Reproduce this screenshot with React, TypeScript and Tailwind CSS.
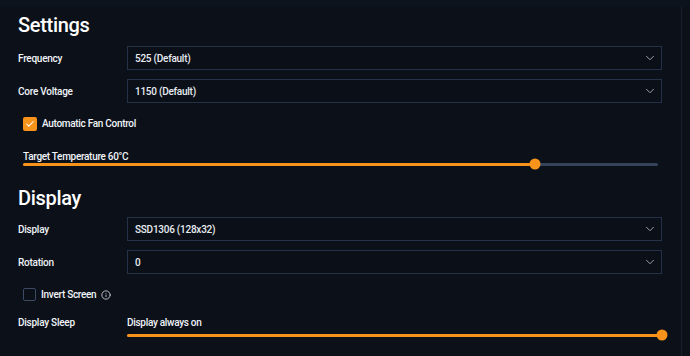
import { ChevronDown, Check, Info } from 'lucide-react';

const font = { fontFamily: 'Roboto, "Liberation Sans", sans-serif' };

function Select({ value }: { value: string }) {
  return (
    <div className="flex h-6 flex-1 items-center justify-between border border-[#233246] bg-[#0b1018] pl-[7px] pr-[4px]">
      <span className="text-[10px] font-medium tracking-[-0.25px] text-[#e8ecf2]">{value}</span>
      <ChevronDown className="h-[14px] w-[14px] text-[#aab3bf]" strokeWidth={1.5} />
    </div>
  );
}

function Row({ label, value }: { label: string; value: string }) {
  return (
    <div className="flex items-center">
      <span className="w-[109px] text-[10px] font-medium tracking-[-0.25px] text-[#f1f4f8]">{label}</span>
      <Select value={value} />
    </div>
  );
}

function Slider({ percent }: { percent: number }) {
  return (
    <div className="relative flex h-3 items-center">
      <div className="h-[3px] w-full rounded-full bg-[#34435a]">
        <div className="h-full rounded-full bg-[#f7931a]" style={{ width: `${percent}%` }} />
      </div>
      <div
        className="absolute top-1/2 h-[11px] w-[11px] -translate-x-1/2 -translate-y-1/2 rounded-full bg-[#f7931a]"
        style={{ left: `${percent}%` }}
      />
    </div>
  );
}

export default function App() {
  return (
    <div className="h-[356px] w-[690px] overflow-hidden bg-[#0b1019]" style={font}>
      <div className="h-[6px] bg-[#0d131d]" />
      <div className="flex h-[350px]">
        <div className="w-[681px] pl-[18px] pr-[19px]">
          <h2 className="mt-[7px] text-[20px] font-medium leading-[24px] tracking-[-0.3px] text-white">Settings</h2>

          <div className="mt-[9px] flex flex-col gap-[9px]">
            <Row label="Frequency" value="525 (Default)" />
            <Row label="Core Voltage" value="1150 (Default)" />
          </div>

          <label className="ml-[5px] mt-[13px] flex items-center gap-[5px]">
            <span className="flex h-[14px] w-[14px] items-center justify-center rounded-[2px] bg-[#f7931a]">
              <Check className="h-[10px] w-[10px] text-white" strokeWidth={2.5} />
            </span>
            <span className="text-[10px] font-medium tracking-[-0.3px] text-[#f1f4f8]">Automatic Fan Control</span>
          </label>

          <div className="ml-[5px] mr-[4px] mt-[20px]">
            <div className="text-[10px] font-medium leading-[12px] tracking-[-0.3px] text-[#f1f4f8]">Target Temperature 60°C</div>
            <div className="mt-[-5px]">
              <Slider percent={80.6} />
            </div>
          </div>

          <h2 className="mt-[16px] text-[20px] font-medium leading-[24px] tracking-[-0.3px] text-white">Display</h2>

          <div className="mt-[7px] flex flex-col gap-[9px]">
            <Row label="Display" value="SSD1306 (128x32)" />
            <Row label="Rotation" value="0" />
          </div>

          <label className="ml-[5px] mt-[13px] flex items-center gap-[5px]">
            <span className="h-[13px] w-[13px] rounded-[2px] border border-[#3a4b63] bg-[#0b1018]" />
            <span className="text-[10px] font-medium tracking-[-0.3px] text-[#f1f4f8]">Invert Screen</span>
            <Info className="h-[10px] w-[10px] text-[#d6dbe2]" strokeWidth={2} />
          </label>

          <div className="mt-[14px] flex items-start">
            <span className="w-[109px] text-[10px] font-medium leading-[14px] tracking-[-0.25px] text-[#f1f4f8]">Display Sleep</span>
            <div className="flex-1">
              <div className="text-[10px] font-medium leading-[14px] tracking-[-0.3px] text-[#f1f4f8]">Display always on</div>
              <div className="mt-[-1px]">
                <Slider percent={100} />
              </div>
            </div>
          </div>
        </div>
        <div className="w-px bg-[#161f2b]" />
        <div className="flex-1 bg-[#0b1019]" />
      </div>
    </div>
  );
}
